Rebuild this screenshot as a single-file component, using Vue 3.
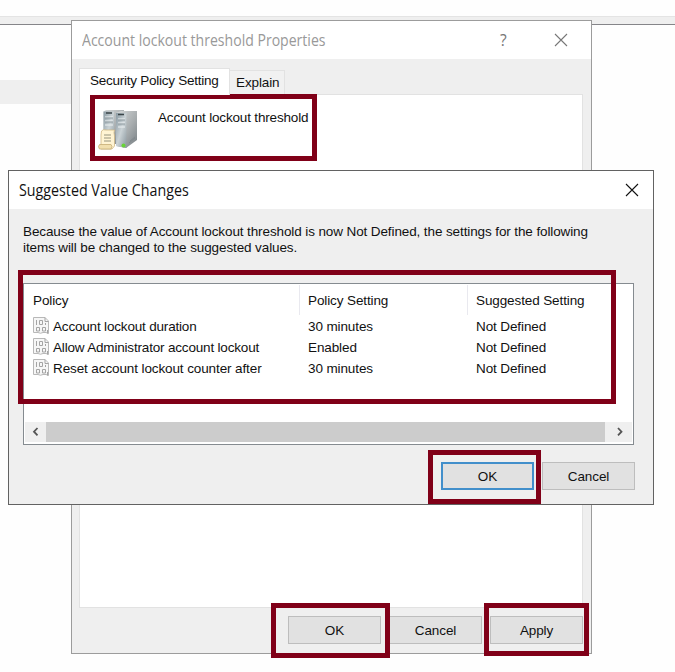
<script setup>
const policies = [
  { name: 'Account lockout duration', w: 'duration', current: '30 minutes', suggested: 'Not Defined' },
  { name: 'Allow Administrator account lockout', w: 'allow', current: 'Enabled', suggested: 'Not Defined' },
  { name: 'Reset account lockout counter after', w: 'reset', current: '30 minutes', suggested: 'Not Defined' },
]
</script>

<template>
  <div class="desktop">
    <div class="backdrop">
      <div class="toolbar"></div>
      <div class="band"></div>
    </div>

    <section class="window properties">
      <header class="titlebar">
        <span class="title">Account lockout threshold Properties</span>
        <span class="help">?</span>
        <svg class="close" width="14" height="14" viewBox="0 0 14 14"><path d="M1 1L13 13M13 1L1 13" /></svg>
      </header>
      <nav class="tabs">
        <span class="tab active"><span class="t-security">Security Policy Setting</span></span>
        <span class="tab"><span>Explain</span></span>
      </nav>
      <div class="panel">
        <svg class="servers" width="42" height="42" viewBox="0 0 42 42">
          <defs>
            <linearGradient id="front" x1="0" y1="0" x2="1" y2="1">
              <stop offset="0" stop-color="#8999a2" /><stop offset=".5" stop-color="#cbd3d6" /><stop offset="1" stop-color="#8a979e" />
            </linearGradient>
            <linearGradient id="side" x1="0" y1="0" x2="1" y2="1">
              <stop offset="0" stop-color="#d7dada" /><stop offset=".55" stop-color="#a8adaf" /><stop offset="1" stop-color="#767e82" />
            </linearGradient>
          </defs>
          <path d="M5.500 1.500L8 0H26V34H17L5.500 31Z" fill="url(#side)" />
          <path d="M5.500 1.500H16V35L5.500 31Z" fill="url(#front)" />
          <path d="M18 3L23 1H39V30L28 38L18 36Z" fill="url(#side)" />
          <path d="M18 3H28.500V38L18 36Z" fill="url(#front)" />
          <path d="M8 3H14M20 4.500H26" stroke="#3b4548" stroke-width="1.300" />
          <path d="M7 7H15M7 11H15M7 15H15M20 9H27M20 13H27M20 17H27" stroke="#edf1f2" />
          <path d="M7 8H15M7 12H15M20 10H27M20 14H27" stroke="#8d999f" />
          <path d="M31 33L37 28M32 31L37 27" stroke="#7b8488" stroke-width=".7" />
          <circle cx="25.500" cy="35.500" r="2" fill="#67d436" />
          <path d="M3.500 21Q5 19 8 20H16.500Q15.500 22 16.500 26V36L14 39H3V25Z" fill="#fff4d3" stroke="#d0b985" stroke-width=".8" />
          <path d="M6 25H13M6 28H13M6 31H13" stroke="#98937e" stroke-width="1.200" />
          <path d="M1.500 34.500H13Q15 36.500 13 39H1.500Q-.5 36.500 1.500 34.500Z" fill="#f1dfae" stroke="#c7ad76" stroke-width=".8" />
        </svg>
        <span class="policy-title">Account lockout threshold</span>
      </div>
      <footer class="actions">
        <button>OK</button><button>Cancel</button><button>Apply</button>
      </footer>
    </section>

    <section class="window suggested">
      <header class="titlebar">
        <span class="title">Suggested Value Changes</span>
        <svg class="close" width="14" height="14" viewBox="0 0 14 14"><path d="M1 1L13 13M13 1L1 13" /></svg>
      </header>
      <p class="message">
        <span class="line first">Because the value of Account lockout threshold is now Not Defined, the settings for the following</span>
        <span class="line">items will be changed to the suggested values.</span>
      </p>
      <div class="list">
        <div class="row head">
          <span>Policy</span><span>Policy Setting</span><span>Suggested Setting</span>
        </div>
        <div v-for="p in policies" :key="p.name" class="row">
          <span class="name">
            <svg width="17" height="18" viewBox="0 0 17 18" fill="none" stroke="#a4a4a4">
              <path d="M.5 .5H12L15.500 4V16.500L13 15.500H10Q7.500 17 5 15.500H.5Z" fill="#f6f6f6" stroke="#b8b8b8" />
              <path d="M12 .5V4.500H15.500M3.500 3V8M6.500 3.500H9.500V7.500H6.500ZM3.500 10.500H6.500V14H3.500ZM9.500 10.500H12.500V14H9.500ZM12.500 6V8M14.500 13V16.500" />
            </svg>
            <span :class="p.w">{{ p.name }}</span>
          </span>
          <span>{{ p.current }}</span><span>{{ p.suggested }}</span>
        </div>
        <div class="scrollbar">
          <svg width="21" height="20" viewBox="0 0 21 20"><path d="M12.500 6L9 9.700L12.500 13.400" /></svg>
          <div class="thumb"></div>
          <svg width="27" height="20" viewBox="0 0 27 20"><path d="M13 6L16.500 9.700L13 13.400" /></svg>
        </div>
      </div>
      <footer class="actions">
        <button class="default">OK</button><button>Cancel</button>
      </footer>
    </section>

    <div class="mark m-policy"></div>
    <div class="mark m-list"></div>
    <div class="mark m-confirm"></div>
    <div class="mark m-ok"></div>
    <div class="mark m-apply"></div>
  </div>
</template>

<style>
body { margin: 0; background: #fff; overflow: hidden; }
</style>

<style scoped>
* { box-sizing: border-box; }
.desktop { position: relative; width: 675px; height: 672px; overflow: hidden; background: #fefefe; color: #111; font: 13.5px/16px "Liberation Sans", Arial, sans-serif; letter-spacing: -.11px; white-space: nowrap; }
.backdrop { padding-top: 16px; }
.toolbar { height: 9px; background: #efefef; border-top: 1px solid #e4e4e4; border-bottom: 1px solid #858589; }
.band { width: 71px; height: 24px; margin-top: 55px; background: #efefef; }
.window { position: absolute; display: flex; flex-direction: column; background: #efefef; border: 1px solid #9c9c9c; }
.properties { left: 71px; top: 20px; width: 521px; height: 634px; }
.suggested { left: 8px; top: 170px; width: 646px; height: 335px; border-color: #626262; }
.titlebar { display: flex; align-items: center; flex: none; height: 38px; padding: 0 14px 0 10px; background: #fff; font: 15.5px/20px "Open Sans", "Noto Sans", sans-serif; }
.properties .titlebar { padding-right: 23px; color: #999; }
.title { margin: 0 auto 0 0; letter-spacing: 0; transform: scaleX(.92); transform-origin: 0 50%; }
.properties .title { transform: scaleX(.907); }
.help { width: 10px; margin: 0 44px 0 0; color: #777; }
.close { fill: none; stroke: #111; stroke-width: 1.1; }
.properties .close { stroke: #777; }
.tabs { display: flex; align-items: flex-end; flex: none; height: 35px; padding-left: 7px; }
.tab { display: flex; align-items: center; height: 24px; width: 55px; padding: 1px 0 0 6px; border: 1px solid #e2e2e2; border-left: 0; border-bottom: 0; background: #f1f1f1; }
.tab.active { width: 151px; height: 27px; margin-bottom: -1px; padding: 0 0 3px 10px; border-left: 1px solid #e2e2e2; background: #fff; z-index: 1; }
.t-security { letter-spacing: -.25px; }
.panel { display: flex; align-items: flex-start; flex: none; width: 504px; height: 514px; margin-left: 7px; padding: 15px 0 0 18px; border: 1px solid #e2e2e2; background: #fff; }
.policy-title { margin: 0 0 0 18px; letter-spacing: -.17px; }
.actions { display: flex; justify-content: flex-end; gap: 8px; }
.properties .actions { padding: 8px 8px 0 0; }
.suggested .actions { padding: 17px 18px 0 0; }
button { width: 93px; height: 28px; padding: 2px 0 0; border: 1px solid #bdbdbd; border-radius: 0; background: #e1e1e1; color: #111; font: inherit; letter-spacing: inherit; }
button.default { border: 2px solid #428fcb; }
.message { height: 74px; margin: 0; padding: 15px 0 0 14px; }
.line { display: block; }
.list { display: flex; flex-direction: column; flex: none; width: 611px; height: 162px; margin-left: 14px; border: 1px solid #858b90; background: #fff; }
.row { display: grid; grid-template-columns: 275px 168px 1fr; align-items: center; height: 21.3px; padding-left: 9px; }
.row.head { height: 32px; }
.head > span { display: flex; align-items: center; height: 30px; padding-top: 1px; }
.head > span + span { margin-left: -9px; padding-left: 8px; border-left: 1px solid #e9e9ef; }
.name { display: flex; align-items: center; gap: 3px; }
.name svg { margin-top: -2px; }
.duration, .allow { letter-spacing: -.18px; }
.scrollbar { display: flex; height: 20px; margin: auto 1px 2px; background: #efefef; }
.scrollbar svg { fill: none; stroke: #555; stroke-width: 1.8; }
.thumb { flex: 1; background: #ccc; }
.mark { position: absolute; border: 5px solid #800018; pointer-events: none; }
.m-policy { left: 90px; top: 94px; width: 227px; height: 67px; }
.m-list { left: 18px; top: 270px; width: 598px; height: 134px; }
.m-confirm { left: 428px; top: 450px; width: 113px; height: 54px; }
.m-ok { left: 271px; top: 603px; width: 119px; height: 55px; }
.m-apply { left: 484px; top: 603px; width: 105px; height: 53px; }
</style>
